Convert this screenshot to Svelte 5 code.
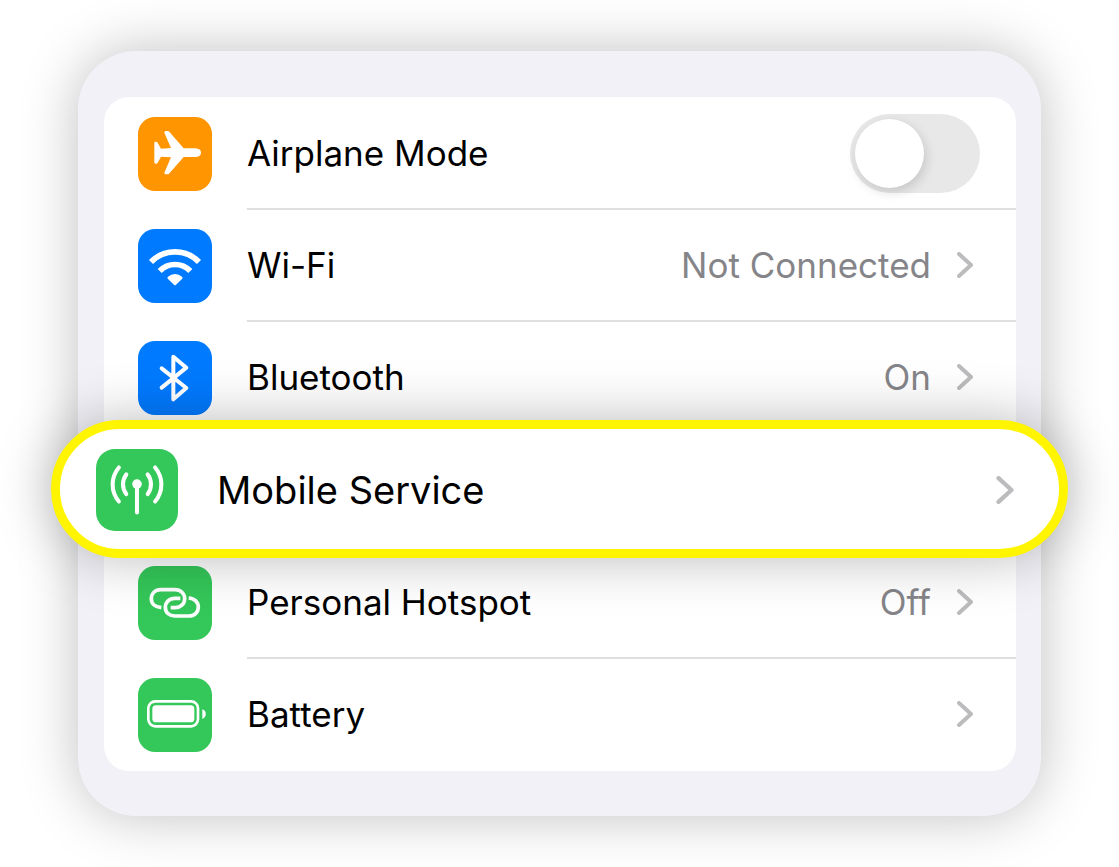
<script lang="ts">
  type Row = {
    id: string;
    label: string;
    color: string;
    value?: string;
    highlighted?: boolean;
  };

  const rows: Row[] = [
    { id: 'airplane', label: 'Airplane Mode', color: 'orange' },
    { id: 'wifi', label: 'Wi-Fi', color: 'blue', value: 'Not Connected' },
    { id: 'bluetooth', label: 'Bluetooth', color: 'blue', value: 'On' },
    { id: 'mobile', label: 'Mobile Service', color: 'green', highlighted: true },
    { id: 'hotspot', label: 'Personal Hotspot', color: 'green', value: 'Off' },
    { id: 'battery', label: 'Battery', color: 'green' },
  ];

  let airplaneMode = $state(false);
</script>

{#snippet icon(id: string)}
  <svg viewBox="0 0 222 222" aria-hidden="true">
    {#if id === 'airplane'}
      <path
        fill="#fff"
        d="M79 47Q79 42 84 42H89Q92 42 95 46L137 94H172Q189 95 189 107Q189 119 172 120H137L95 168Q92 172 89 172H84Q79 172 79 167L99 121L69 119L59 137Q57 140 54 140H52Q49 140 49 136V78Q49 74 52 74H54Q57 74 59 77L69 95L99 93Z"
      />
    {:else if id === 'wifi'}
      <g fill="none" stroke="#fff" stroke-width="17">
        <path d="M39 99A101 101 0 0 1 183 99" />
        <path d="M65 126A64 64 0 0 1 157 126" />
      </g>
      <path fill="#fff" d="M90 150Q86 147 90 143A32 32 0 0 1 132 143Q136 147 132 150L114 167Q111 170 108 167Z" />
    {:else if id === 'bluetooth'}
      <path
        fill="none"
        stroke="#fff"
        stroke-width="12"
        stroke-linecap="round"
        stroke-linejoin="round"
        d="M71 82L145 141L106 175V47L145 80L71 140"
      />
    {:else if id === 'mobile'}
      <g fill="none" stroke="#fff" stroke-width="11" stroke-linecap="round">
        <path d="M62 50A71 71 0 0 0 62 142M160 50A71 71 0 0 1 160 142" />
        <path d="M82 69A44 44 0 0 0 82 122M140 69A44 44 0 0 1 140 122" />
        <path d="M111 96V172" />
      </g>
      <circle cx="111" cy="95" r="13" fill="#fff" />
    {:else if id === 'hotspot'}
      <g fill="none" stroke="#fff" stroke-width="11">
        <path d="M70 125C51 123 40 113 40 99C40 83 51 71 69 71H111C128 71 140 83 140 98C140 114 127 125 112 125H98" />
        <path d="M127 97H111C94 97 82 108 82 124C82 140 94 150 111 150H152C169 150 181 139 181 124C181 109 170 97 152 96" />
      </g>
    {:else}
      <rect x="31" y="70" width="149" height="75" rx="21" fill="none" stroke="#fff" stroke-width="8" />
      <rect x="43" y="82" width="126" height="51" rx="11" fill="#fff" />
      <path fill="#fff" d="M193 94C207 98 207 118 193 123Z" />
    {/if}
  </svg>
{/snippet}

<main class="page">
  <div class="panel">
    <ul class="list">
      {#each rows as row (row.id)}
        <li class="item" class:highlighted={row.highlighted}>
          {#if row.id === 'airplane'}
            <label class="row">
              <span class="tile {row.color}">{@render icon(row.id)}</span>
              <span class="content">
                <span class="name">{row.label}</span>
                <input type="checkbox" role="switch" class="switch" bind:checked={airplaneMode} />
              </span>
            </label>
          {:else}
            <button type="button" class="row">
              <span class="tile {row.color}">{@render icon(row.id)}</span>
              <span class="content">
                <span class="name">{row.label}</span>
                {#if row.value}
                  <span class="value">{row.value}</span>
                {/if}
                <svg class="chevron" viewBox="0 0 16 26" aria-hidden="true">
                  <path d="M2 2L14 13L2 24" />
                </svg>
              </span>
            </button>
          {/if}
        </li>
      {/each}
    </ul>
  </div>
</main>

<style>
  :global(body) {
    background: #fff;
  }

  .page {
    padding: 51px 78px;
    font-family: Inter, 'Liberation Sans', sans-serif;
    font-size: 35px;
    line-height: 44px;
    color: #000;
  }

  .panel {
    padding: 46px 25px 45px 26px;
    border-radius: 58px;
    background: #f2f1f7;
    box-shadow: 0 0 56px rgba(0, 0, 0, 0.25);
  }

  .list {
    margin: 0;
    padding: 1px 0 0;
    list-style: none;
    border-radius: 25px;
    background: #fff;
  }

  .row {
    display: flex;
    align-items: stretch;
    box-sizing: border-box;
    width: 100%;
    height: 112px;
    margin: 0;
    padding: 0 0 0 34px;
    border: 0;
    background: none;
    color: inherit;
    font: inherit;
    text-align: left;
    cursor: pointer;
  }

  .tile {
    flex: none;
    align-self: center;
    width: 74px;
    height: 74px;
    margin-right: 35px;
    border-radius: 17px;
  }

  .tile svg {
    display: block;
    width: 100%;
    height: 100%;
  }

  .orange {
    background: #ff9500;
  }

  .blue {
    background: #007aff;
  }

  .green {
    background: #34c759;
  }

  .content {
    display: flex;
    flex: 1;
    align-items: center;
    padding-right: 43px;
    border-bottom: 2px solid #dfdfe0;
  }

  .item:last-child .content {
    border-bottom-color: transparent;
  }

  .name {
    flex: 1;
  }

  .value {
    color: #858589;
  }

  .chevron {
    flex: none;
    width: 16px;
    height: 26px;
    margin-left: 26px;
  }

  .chevron path {
    fill: none;
    stroke: #bcbcbe;
    stroke-width: 4;
    stroke-linecap: round;
    stroke-linejoin: round;
  }

  .switch {
    appearance: none;
    flex: none;
    width: 130px;
    height: 79px;
    margin: 0 -7px 0 0;
    padding: 5px;
    border-radius: 40px;
    background: #e8e8e8;
    cursor: pointer;
  }

  .switch::before {
    content: '';
    display: block;
    width: 69px;
    height: 69px;
    border-radius: 50%;
    background: #fff;
    box-shadow: 2px 4px 12px rgba(0, 0, 0, 0.15);
  }

  .switch:checked {
    background: #34c759;
  }

  .switch:checked::before {
    margin-left: auto;
  }

  /* The called-out row is larger and spills over the panel on both sides */
  .highlighted {
    position: relative;
    z-index: 1;
    margin: -14px -52px -11px -53px;
    border: 9px solid #fff500;
    border-radius: 69px;
    background: #fff;
    box-shadow: 0 0 56px rgba(0, 0, 0, 0.27);
    font-size: 38px;
  }

  .highlighted .row {
    height: 120px;
    padding: 2px 0 0 36px;
  }

  .highlighted .tile {
    width: 82px;
    height: 82px;
    margin-right: 39px;
    border-radius: 19px;
  }

  .highlighted .content {
    padding-right: 45px;
    border-bottom: 0;
  }

  .highlighted .chevron {
    width: 18px;
    height: 28px;
  }
</style>
